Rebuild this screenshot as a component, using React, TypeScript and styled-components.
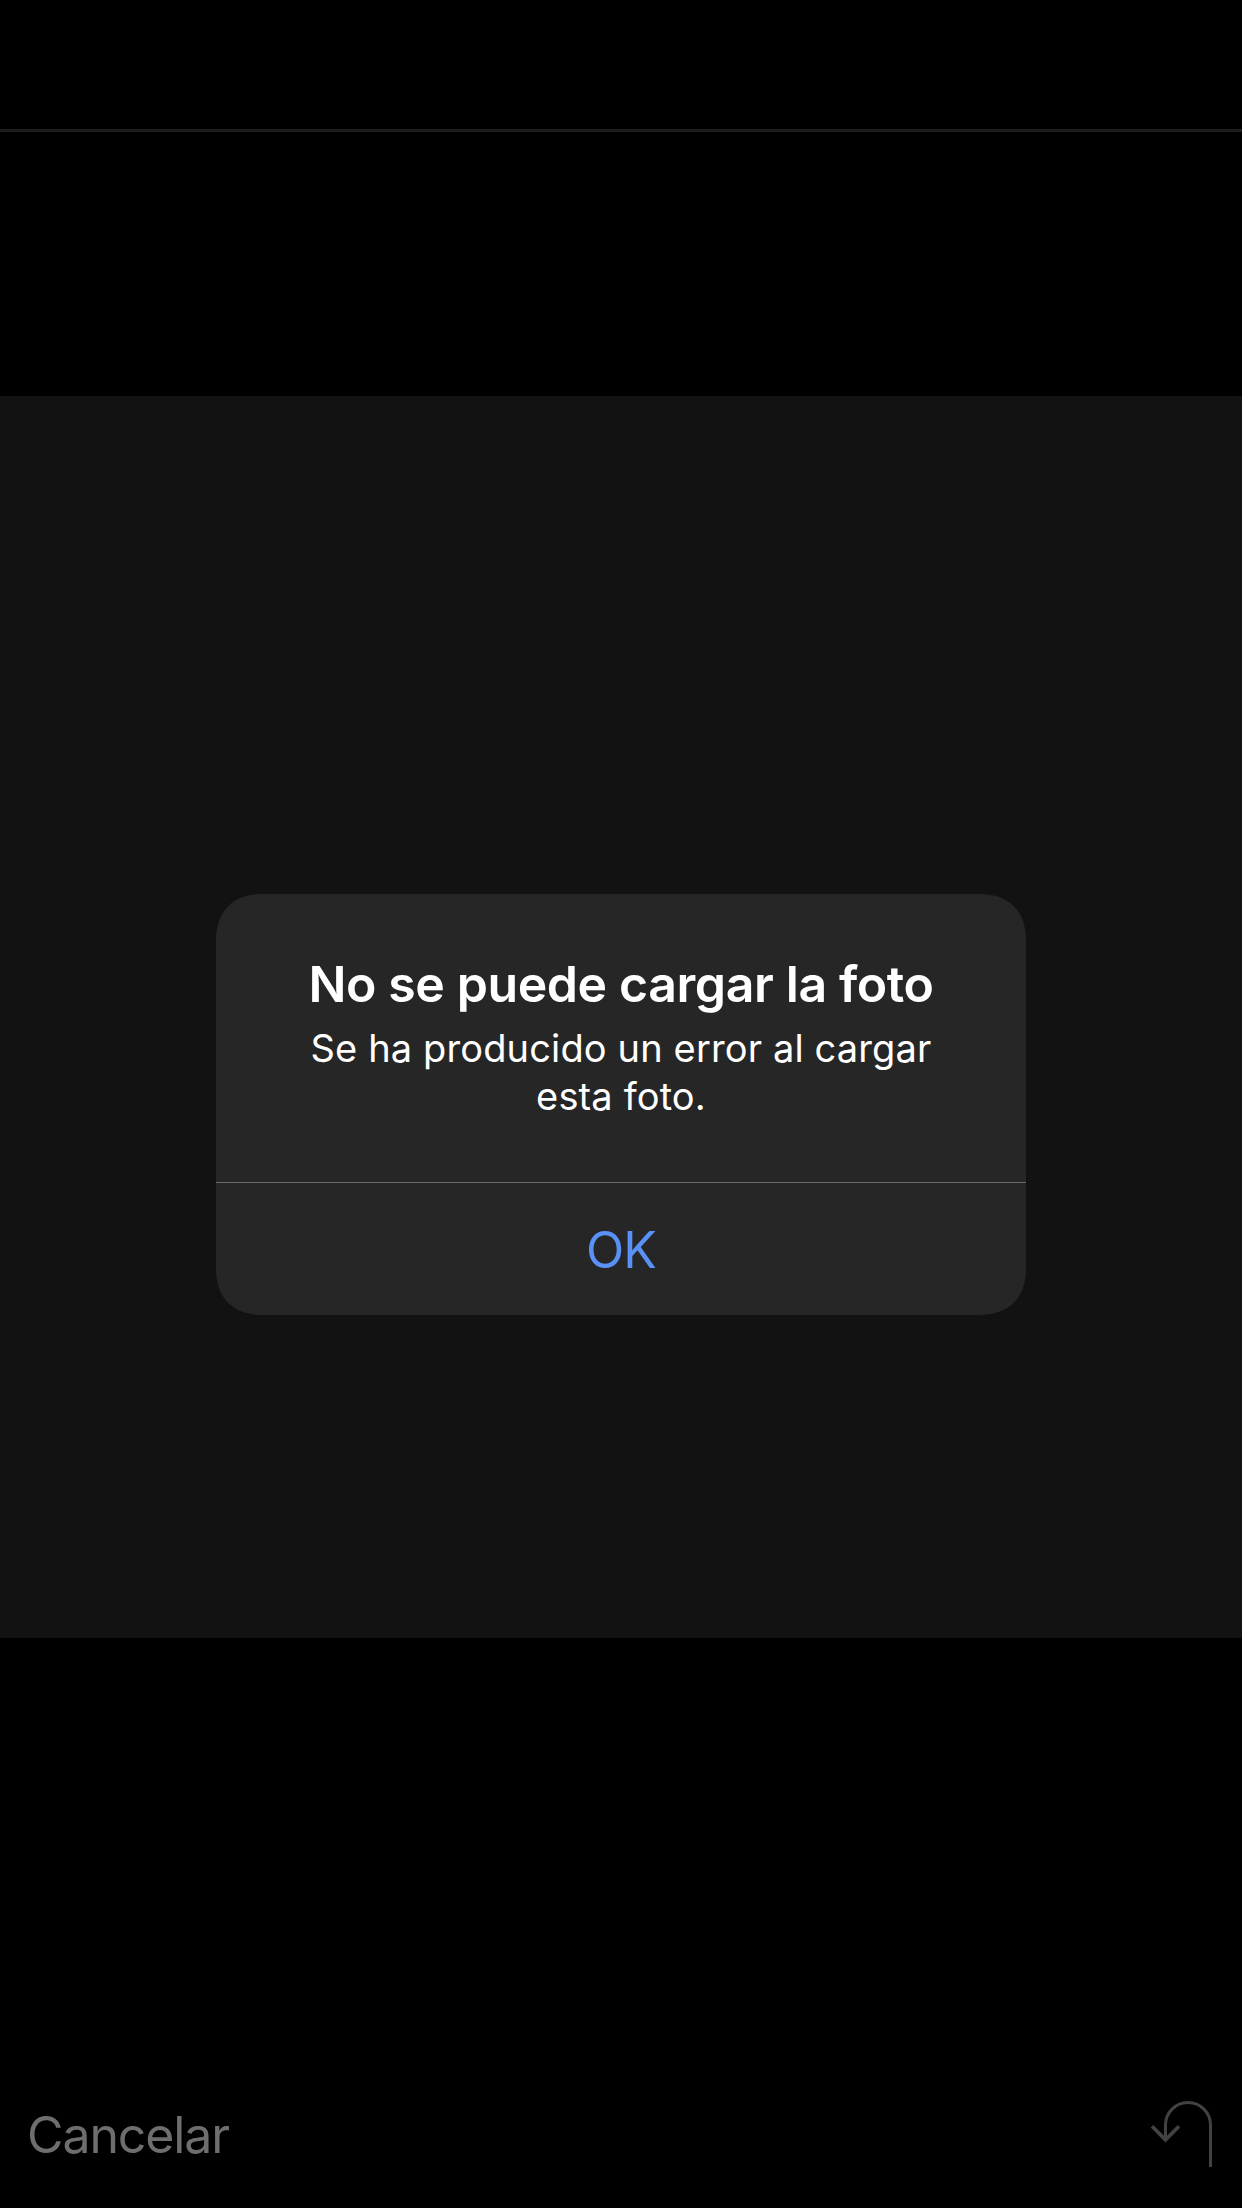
import React from "react";
import styled, { createGlobalStyle } from "styled-components";

const GlobalStyle = createGlobalStyle`
  body {
    margin: 0;
    background: #000;
  }
  * {
    box-sizing: border-box;
  }
`;

const Screen = styled.div`
  display: flex;
  flex-direction: column;
  width: 1242px;
  height: 2208px;
  overflow: hidden;
  background: #000;
  font-family: Inter, "Liberation Sans", sans-serif;
`;

const TopBar = styled.header`
  height: 132px;
  border-bottom: 3px solid #1d1d1d;
`;

const Letterbox = styled.div`
  height: 264px;
`;

const Photo = styled.main`
  display: flex;
  flex-direction: column;
  align-items: center;
  height: 1242px;
  padding-top: 498px;
  background: #121212;
`;

const Dialog = styled.section`
  display: flex;
  flex-direction: column;
  width: 810px;
  height: 421px;
  border-radius: 40px;
  overflow: hidden;
  background: #262626;
  text-align: center;

  @supports (corner-shape: superellipse(1.25)) {
    border-radius: 48px;
    corner-shape: superellipse(1.25);
  }
`;

const Message = styled.div`
  height: 288px;
  padding: 60px 48px 0;
`;

const Title = styled.h1`
  margin: 0;
  font-size: 50px;
  line-height: 60px;
  font-weight: 600;
  letter-spacing: -0.4px;
  color: #fff;
  white-space: nowrap;
`;

const Description = styled.p`
  width: 660px;
  margin: 10px auto 0;
  font-size: 38px;
  line-height: 48px;
  letter-spacing: 0.14px;
  color: #fff;
`;

const DialogButton = styled.button`
  flex: 1;
  padding: 2px 0 0;
  border: 0;
  border-top: 1px solid #686868;
  background: transparent;
  font-family: inherit;
  font-size: 50px;
  line-height: 60px;
  letter-spacing: -1px;
  color: #5a91f7;
`;

const Toolbar = styled.footer`
  display: flex;
  align-items: center;
  justify-content: space-between;
  height: 144px;
  margin-top: auto;
  padding: 0 28px 2px 27px;
`;

const CancelButton = styled.button`
  padding: 0;
  border: 0;
  background: transparent;
  font-family: inherit;
  font-size: 50px;
  line-height: 60px;
  letter-spacing: -1.1px;
  color: #6e6e6e;
`;

const UndoButton = styled.button`
  display: flex;
  padding: 0;
  border: 0;
  background: transparent;
  color: #424242;
`;

const UndoIcon = () => (
  <svg width="64" height="68" viewBox="0 0 64 68" fill="none" stroke="currentColor" strokeWidth="3">
    <path d="M60.5 66V24a22.5 22.5 0 0 0-45 0V39" />
    <path d="M2 25.2 15.5 38.8 29 25.2" strokeWidth="3.7" />
  </svg>
);

export default function App() {
  return (
    <Screen>
      <GlobalStyle />
      <TopBar />
      <Letterbox />
      <Photo>
        <Dialog role="alertdialog">
          <Message>
            <Title>No se puede cargar la foto</Title>
            <Description>
              Se ha producido un error al cargar
              <br />
              esta foto.
            </Description>
          </Message>
          <DialogButton>OK</DialogButton>
        </Dialog>
      </Photo>
      <Toolbar>
        <CancelButton>Cancelar</CancelButton>
        <UndoButton aria-label="Deshacer">
          <UndoIcon />
        </UndoButton>
      </Toolbar>
    </Screen>
  );
}
